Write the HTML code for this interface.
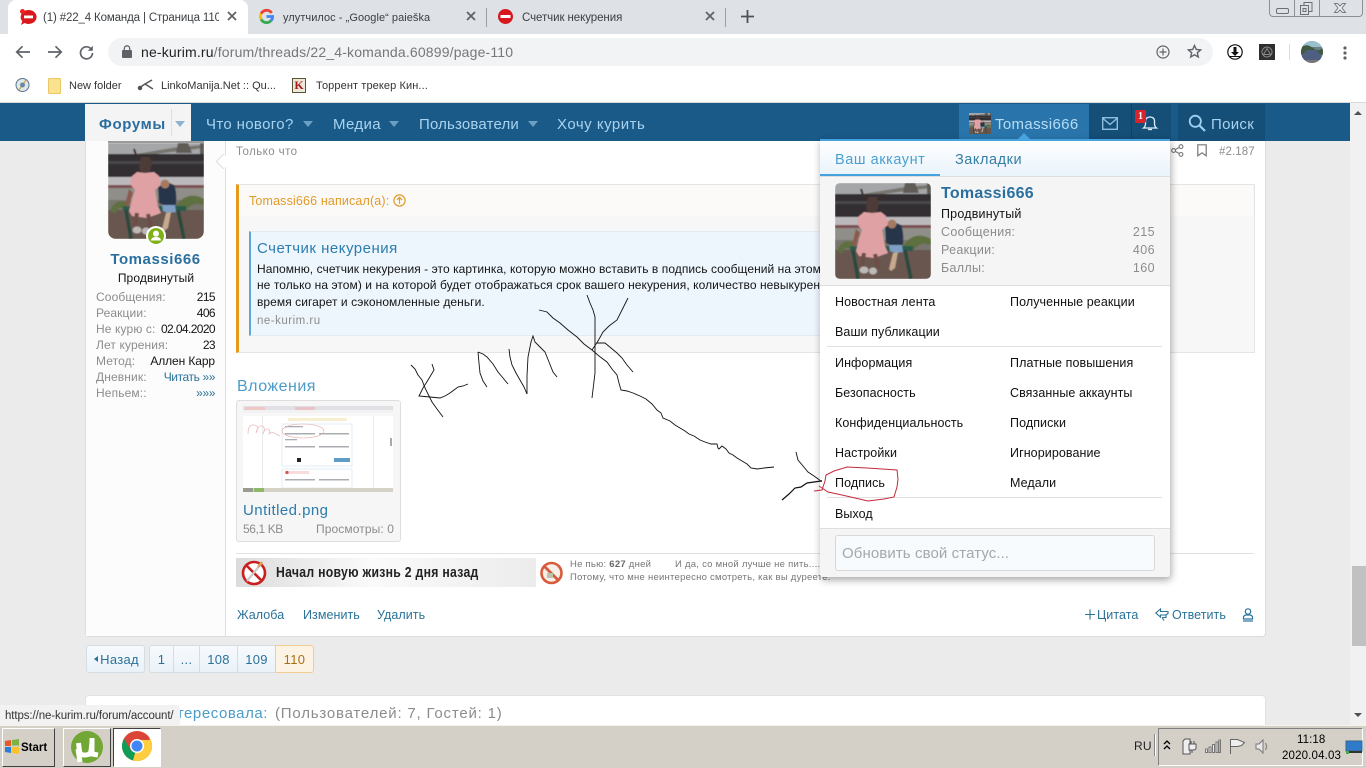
<!DOCTYPE html>
<html lang="ru"><head><meta charset="utf-8"><title>#22_4 Команда</title>
<style>
html,body{margin:0;padding:0;width:1366px;height:768px;overflow:hidden;background:#ebebeb;font-family:"Liberation Sans","Noto Sans CJK SC",sans-serif;font-size:13px;color:#141414}
.a{position:absolute}
.t{position:absolute;white-space:nowrap;line-height:16px;letter-spacing:.42px;margin-top:2px}
.m{font-size:12.5px;letter-spacing:.08px;color:#111}
.s{font-size:12px;letter-spacing:.12px}
.v{font-size:12px;letter-spacing:-.6px}
.b{font-size:12.5px;letter-spacing:.06px}
.r{text-align:right}
.g{color:#8c8c8c}
.l{color:#2a7299}
.n{color:#a9d3ef;font-size:15px;letter-spacing:.25px}
.tri{position:absolute;width:0;height:0;border-left:5.5px solid transparent;border-right:5.5px solid transparent;border-top:6px solid #6c9fc4}
.pg{position:absolute;top:645px;height:26px;line-height:28px;text-align:center;background:linear-gradient(#f7fafd,#eaf2f8);border:1px solid #d4dde3;color:#2a7299;letter-spacing:.3px}
svg{position:absolute;overflow:visible}
</style></head><body>
<svg width="0" height="0" style="position:absolute"><defs>
<filter id="soft"><feGaussianBlur stdDeviation=".55"/></filter>
<symbol id="av" viewBox="0 0 96 96" preserveAspectRatio="none">
<g filter="url(#soft)">
<rect width="96" height="96" fill="#7d7a74"/>
<rect width="96" height="12" fill="#a5a6a8"/>
<path d="M28 11L70 4l26-2v3L40 12z" fill="#77746e"/>
<path d="M70 0h10l4 10H68zM92 0h4v12h-4z" fill="#5f5c57"/>
<rect y="11" width="96" height="23" fill="#302e31"/>
<rect y="18" width="96" height="3" fill="#4a4748"/>
<rect y="34" width="96" height="9" fill="#bcb9bd"/>
<rect y="42" width="96" height="3" fill="#7c5052"/>
<rect y="45" width="96" height="12" fill="#8f8e88"/>
<rect y="57" width="96" height="10" fill="#77756d"/>
<rect y="67" width="96" height="29" fill="#675750"/>
<path d="M2 68q6-14 18-8l-1 6-9-1-3 6zM66 66q12-20 30-10v6q-12-4-18 6z" fill="#5f6f3f"/>
<path d="M15 63h63v5H15z" fill="#2c5b4d"/>
<path d="M18 67l5 29M70 67l6 29" stroke="#2c4a3c" stroke-width="3.500"/>
<path d="M50 44q3-5 9-5l7 3q3 6 2 20l-8 2-9-4z" fill="#26344a"/>
<circle cx="57" cy="41" r="4.500" fill="#a67a60"/>
<path d="M54 62h13l1 7-8 1-5-2z" fill="#7d9fc4"/>
<path d="M58 70l5-1-3 16-4 3-2-2z" fill="#c6a98e"/>
<path d="M33 14h9l2 7-2 7-3 3h-5l-3-6z" fill="#4d3b38"/>
<path d="M26 6l2 6 5 3M48 11l-2 4-4 1" stroke="#3a2e2c" stroke-width="2" fill="none"/>
<path d="M29 29l8 1 9-1 5 4 2 9-6 5 3 16 3 7-14 5-15-2-3-5 3-12 3-9-5-6 1-7z" fill="#dfa1a4"/>
<path d="M21 46l-4 16 3 2 5-14z" fill="#8c5a4e"/>
<path d="M29 70l-2 14M40 71l3 14" stroke="#6e4e46" stroke-width="4"/>
<ellipse cx="29" cy="87" rx="4.500" ry="3.500" fill="#bdb9b6"/><ellipse cx="38" cy="88" rx="4" ry="3.500" fill="#bdb9b6"/>
</g>
</symbol>
</defs></svg>

<!-- page area -->
<div class="a" style="left:0;top:103px;width:1350px;height:622px;background:#ebebeb"></div>
<div class="a" style="left:1350px;top:103px;width:16px;height:622px;background:#f1f1f1"></div>
<div class="a" style="left:1352px;top:566px;width:14px;height:80px;background:#c1c1c1"></div>
<div class="a" style="left:1354px;top:111px;width:0;height:0;border-left:4px solid transparent;border-right:4px solid transparent;border-bottom:4px solid #505050"></div>
<div class="a" style="left:1354px;top:713px;width:0;height:0;border-left:4px solid transparent;border-right:4px solid transparent;border-top:4px solid #505050"></div>

<!-- post card -->
<div class="a" style="left:85px;top:135px;width:1179px;height:501px;background:#fff;border:1px solid #dcdcdc;border-top:0;border-radius:0 0 4px 4px"></div>
<div class="a" style="left:86px;top:141px;width:139px;height:495px;background:#fcfcfc;border-right:1px solid #dedede"></div>
<div class="a" style="left:218px;top:156px;width:10px;height:10px;background:#fff;transform:rotate(45deg);border-left:1px solid #dedede;border-bottom:1px solid #dedede"></div>
<svg style="left:108px;top:143px;border-radius:0 0 8px 8px;overflow:hidden" width="96" height="96"><use href="#av" width="96" height="96"/></svg>
<div class="a" style="left:108px;top:141px;width:96px;height:2px;background:#9a9a9a"></div>
<svg style="left:146px;top:226px" width="20" height="20" viewBox="0 0 20 20"><circle cx="10" cy="10" r="10" fill="#fff"/><circle cx="10" cy="10" r="8" fill="#7fb016"/><circle cx="10" cy="7.6" r="3" fill="#fff"/><path d="M4.800 14.500q1-3.600 5.200-3.600t5.200 3.600z" fill="#fff"/></svg>
<div class="t" style="left:86px;width:139px;text-align:center;top:250px;font-size:15px;font-weight:bold;color:#2a6f9f;letter-spacing:.55px">Tomassi666</div>
<div class="t" style="left:86px;width:140px;text-align:center;top:268px;font-size:12px;letter-spacing:.1px">Продвинутый</div>
<div class="t g s" style="left:96px;top:287px">Сообщения:</div><div class="t r v" style="right:1151px;top:287px">215</div>
<div class="t g s" style="left:96px;top:303px">Реакции:</div><div class="t r v" style="right:1151px;top:303px">406</div>
<div class="t g s" style="left:96px;top:319px">Не курю с:</div><div class="t r v" style="right:1151px;top:319px">02.04.2020</div>
<div class="t g s" style="left:96px;top:335px">Лет курения:</div><div class="t r v" style="right:1151px;top:335px">23</div>
<div class="t g s" style="left:96px;top:351px">Метод:</div><div class="t r" style="right:1151px;top:351px;font-size:12px;letter-spacing:-.1px">Аллен Карр</div>
<div class="t g s" style="left:96px;top:367px">Дневник:</div><div class="t r l" style="right:1151px;top:367px;font-size:12px;letter-spacing:-.4px">Читать »»</div>
<div class="t g s" style="left:96px;top:383px">Непьем::</div><div class="t r l" style="right:1151px;top:383px;font-size:12px;letter-spacing:-.4px">»»»</div>

<div class="t g" style="left:236px;top:142px;font-size:11.5px">Только что</div>
<svg style="left:1171px;top:144px" width="13" height="13" viewBox="0 0 13 13" fill="none" stroke="#777" stroke-width="1.100"><circle cx="2.600" cy="6.500" r="1.900"/><circle cx="10" cy="2.600" r="1.900"/><circle cx="10" cy="10.400" r="1.900"/><path d="M4.300 5.600l4-2.200M4.300 7.400l4 2.200"/></svg>
<svg style="left:1197px;top:144px" width="10" height="13" viewBox="0 0 10 13" fill="none" stroke="#777" stroke-width="1.200"><path d="M.8.800h8.400v11L5 8.800.8 11.800z"/></svg>
<div class="t g" style="left:1219px;top:142px;font-size:11.500px;letter-spacing:.1px">#2.187</div>

<!-- quote -->
<div class="a" style="left:236px;top:184px;width:1015px;height:167px;background:#f7f7f7;border:1px solid #e5e5e5;border-left:3px solid #e59a1e"></div>
<div class="a" style="left:239px;top:185px;width:1014px;height:31px;background:#fbfaf8"></div>
<div class="t" style="left:249px;top:191px;color:#e09b2a;font-size:12.500px;letter-spacing:.15px">Tomassi666 написал(а):</div>
<svg style="left:393px;top:194px" width="13" height="13" viewBox="0 0 13 13" fill="none" stroke="#e09b2a" stroke-width="1.200"><circle cx="6.500" cy="6.500" r="5.600"/><path d="M6.500 9.700V3.600M3.900 6l2.600-2.600L9.100 6"/></svg>
<div class="a" style="left:249px;top:231px;width:600px;height:103px;background:#eef6fd;border:1px solid #e3ebf1;border-left:2px solid #5ea7d3"></div>
<div class="t" style="left:257px;top:239px;font-size:15px;color:#2d7cae;letter-spacing:.5px">Счетчик некурения</div>
<div class="t" style="left:257px;top:259px;font-size:12px;letter-spacing:.06px">Напомню, счетчик некурения - это картинка, которую можно вставить в подпись сообщений на этом</div>
<div class="t" style="left:257px;top:275px;font-size:12px;letter-spacing:.06px">не только на этом) и на которой будет отображаться срок вашего некурения, количество невыкуренн</div>
<div class="t" style="left:257px;top:292px;font-size:12px;letter-spacing:.06px">время сигарет и сэкономленные деньги.</div>
<div class="t g" style="left:257px;top:311px;font-size:11.500px;letter-spacing:.5px">ne-kurim.ru</div>

<!-- attachment -->
<div class="t" style="left:237px;top:377px;font-size:16px;color:#4b9bc9;letter-spacing:.5px">Вложения</div>
<div class="a" style="left:236px;top:400px;width:163px;height:140px;background:#f6f6f6;border:1px solid #dedede;border-radius:3px"></div>
<svg style="left:243px;top:406px" width="150" height="86" viewBox="0 0 150 86">
<rect width="150" height="86" fill="#fff"/><rect width="150" height="4" fill="#dfe1e4"/><rect y="4" width="150" height="3" fill="#f2f2f2"/><rect y="7" width="150" height="3" fill="#f7f7f7"/>
<rect x="2" y="1" width="20" height="3" fill="#f3c6c6"/><rect x="52" y="1" width="20" height="3" fill="#e9c3c8"/>
<rect x="45" y="12" width="59" height="3" fill="#f8efd3"/>
<rect x="19" y="10" width="1" height="72" fill="#ebebeb"/><rect x="130" y="10" width="1" height="72" fill="#ebebeb"/>
<rect x="39" y="18" width="70" height="42" fill="#fff" stroke="#d5e4f0" stroke-width=".7"/>
<rect x="39" y="63" width="70" height="19" fill="#fff" stroke="#d5e4f0" stroke-width=".7"/>
<g fill="#a9adb2"><rect x="42" y="20" width="18" height="1.300"/><rect x="42" y="33" width="12" height="1.300"/><rect x="42" y="27" width="30" height="1.500"/><rect x="76" y="27" width="30" height="1.500"/><rect x="42" y="40" width="30" height="1.500"/><rect x="76" y="40" width="30" height="1.500"/><rect x="42" y="73" width="30" height="1.500"/><rect x="76" y="73" width="30" height="1.500"/></g>
<rect x="54" y="52" width="4" height="4" fill="#222"/><rect x="91" y="52" width="16" height="4" fill="#5e9dc4"/><rect x="42" y="65" width="24" height="3" fill="#f6dcdc"/><circle cx="44" cy="66.500" r="1.600" fill="#d9534f"/>
<path d="M5 28q0-10 6-9t2 8q2-8 6-7t1 8q2-6 5-5t1 5l3-2 8 4" fill="none" stroke="#edbcbc" stroke-width=".8"/>
<ellipse cx="60" cy="25" rx="21" ry="7" fill="none" stroke="#e8a7a7" stroke-width=".6"/>
<rect x="147" y="32" width="2" height="8" fill="#aaa"/><rect y="82" width="150" height="4" fill="#d5d2c8"/><rect x="0" y="82" width="10" height="4" fill="#9a9a90"/><rect x="11" y="82" width="10" height="4" fill="#8fb868"/>
</svg>
<div class="t l" style="left:243px;top:501px;font-size:15px;color:#2b7cab;letter-spacing:.45px">Untitled.png</div>
<div class="t g" style="left:243px;top:519px;font-size:12px;letter-spacing:-.4px">56,1 KB</div>
<div class="t g r" style="right:972px;top:519px;font-size:12px;letter-spacing:.1px">Просмотры: 0</div>

<!-- signature -->
<div class="a" style="left:236px;top:553px;width:1018px;height:1px;background:#e2e2e2"></div>
<div class="a" style="left:236px;top:558px;width:300px;height:29px;background:linear-gradient(90deg,#dcdcdc,#fafafa 45%,#ececec)"></div>
<svg style="left:241px;top:559px" width="26" height="27" viewBox="0 0 26 27"><circle cx="13" cy="14" r="11" fill="#fff" stroke="#c8201f" stroke-width="2.600"/><path d="M5 6l16 16" stroke="#c8201f" stroke-width="2.600"/><path d="M6 22L20 5" stroke="#c9c9c9" stroke-width="2.200"/><path d="M17 8l4-5" stroke="#d9a15a" stroke-width="2.400"/></svg>
<div class="t" style="left:276px;top:563px;font-size:15px;font-weight:bold;letter-spacing:.35px;transform:scaleX(.815);transform-origin:0 50%;color:#222">Начал новую жизнь 2 дня назад</div>
<svg style="left:539px;top:560px" width="25" height="26" viewBox="0 0 25 26"><circle cx="12.500" cy="13" r="10" fill="#f7efe8" stroke="#d85b3c" stroke-width="2.600"/><path d="M5 6l15 15" stroke="#d85b3c" stroke-width="2.800"/><rect x="8" y="13" width="6" height="5" fill="#b9c4a8"/></svg>
<div class="t" style="left:570px;top:555px;font-size:9.500px;color:#777;letter-spacing:.25px">Не пью: <b style="color:#666">627</b> дней</div>
<div class="t" style="left:675px;top:555px;font-size:9.500px;color:#777;letter-spacing:.25px">И да, со мной лучше не пить....</div>
<div class="t" style="left:570px;top:568px;font-size:9.500px;color:#777;letter-spacing:.25px">Потому, что мне неинтересно смотреть, как вы дуреете.</div>

<!-- actions -->
<div class="t l b" style="left:237px;top:605px">Жалоба</div>
<div class="t l b" style="left:303px;top:605px">Изменить</div>
<div class="t l b" style="left:377px;top:605px">Удалить</div>
<svg style="left:1085px;top:609px" width="10" height="11" viewBox="0 0 10 11" stroke="#2a7299" stroke-width="1.100"><path d="M5 .5v10M0 5.500h10"/></svg>
<div class="t l b" style="left:1097px;top:605px">Цитата</div>
<svg style="left:1155px;top:608px" width="14" height="13" viewBox="0 0 14 13" fill="none" stroke="#2a7299" stroke-width="1.100"><path d="M5.500 1L.8 5l4.700 4V7h5.500l2-1.500V3.500H5.500z"/><path d="M11 7v2.500H7.500M9 12.500l-2-3"/></svg>
<div class="t l b" style="left:1172px;top:605px">Ответить</div>
<svg style="left:1242px;top:608px" width="12" height="14" viewBox="0 0 12 14" fill="none" stroke="#2a7299" stroke-width="1.200"><circle cx="6" cy="3.500" r="2.700"/><path d="M1.500 9.500q0-2 2.500-2.500h4q2.500.5 2.500 2.500v1.500h-9z"/><path d="M1 13h10"/></svg>

<!-- pagination -->
<div class="pg" style="left:86px;width:57px;border-radius:3px;text-indent:8px">Назад</div>
<div class="a" style="left:94px;top:656px;width:0;height:0;border-top:3.500px solid transparent;border-bottom:3.500px solid transparent;border-right:4px solid #2a7299"></div>
<div class="pg" style="left:149px;width:23px;border-radius:3px 0 0 3px">1</div>
<div class="pg" style="left:173px;width:25px">...</div>
<div class="pg" style="left:199px;width:37px">108</div>
<div class="pg" style="left:237px;width:37px">109</div>
<div class="pg" style="left:275px;width:37px;background:#fdf3e5;border-color:#f1cd92;color:#a96f12;border-radius:0 3px 3px 0">110</div>

<!-- bottom card -->
<div class="a" style="left:85px;top:695px;width:1179px;height:40px;background:#fff;border:1px solid #e2e2e2;border-radius:4px 4px 0 0"></div>
<div class="t r" style="right:1098px;top:704px;font-size:15px;color:#4b9bc9;letter-spacing:.55px">Тему интересовала:</div>
<div class="t g" style="left:275px;top:704px;font-size:15px;letter-spacing:.8px;color:#8c8c8c">(Пользователей: 7, Гостей: 1)</div>
<div class="a" style="left:0;top:705px;width:180px;height:20px;background:#f2f2f2;border-radius:0 3px 0 0"></div>
<div class="t" style="left:5px;top:706px;font-size:11.500px;color:#333;letter-spacing:-.1px">https://ne-kurim.ru/forum/account/</div>

<!-- nav -->
<div class="a" style="left:0;top:103px;width:1350px;height:38px;background:#1a5a88"></div>
<div class="a" style="left:0;top:102px;width:1366px;height:1px;background:#dadada"></div>
<div class="a" style="left:85px;top:104px;width:106px;height:37px;background:#f4f4f4"></div>
<div class="t" style="left:99px;top:115px;font-size:15px;font-weight:bold;color:#2b6d9f;letter-spacing:.65px">Форумы</div>
<div class="a" style="left:171px;top:109px;width:1px;height:27px;background:#dedede"></div>
<div class="tri" style="left:175px;top:121px;border-top-color:#8fb3cf"></div>
<div class="t n" style="left:206px;top:115px;letter-spacing:.35px">Что нового?</div><div class="tri" style="left:303px;top:121px"></div>
<div class="t n" style="left:333px;top:115px;letter-spacing:.35px">Медиа</div><div class="tri" style="left:389px;top:121px"></div>
<div class="t n" style="left:419px;top:115px;letter-spacing:.17px">Пользователи</div><div class="tri" style="left:528px;top:121px"></div>
<div class="t n" style="left:557px;top:115px;letter-spacing:.5px">Хочу курить</div>
<div class="a" style="left:959px;top:104px;width:130px;height:37px;background:#2975ab"></div>
<svg style="left:969px;top:113px" width="22" height="21"><use href="#av" width="22" height="21"/></svg>
<div class="t n" style="left:995px;top:115px;color:#b7ddf6;letter-spacing:.35px">Tomassi666</div>
<div class="a" style="left:1089px;top:104px;width:42px;height:37px;background:#154e77"></div>
<div class="a" style="left:1131px;top:104px;width:39px;height:37px;background:#154e77;border-left:1px solid #0f4268"></div>
<svg style="left:1102px;top:117px" width="16" height="13" viewBox="0 0 16 13" fill="none" stroke="#8ebfe0" stroke-width="1.400"><rect x=".7" y=".7" width="14.600" height="11.600"/><path d="M1 1.500l7 6 7-6"/></svg>
<svg style="left:1142px;top:115px" width="16" height="16" viewBox="0 0 16 16" fill="none" stroke="#dcf0ff" stroke-width="1.300"><path d="M1.500 13h13q-2-1.500-2-4V6.500q0-4.500-4.500-4.500T3.500 6.500V9q0 2.500-2 4z"/><path d="M6 14.500h4"/></svg>
<div class="a" style="left:1135px;top:110px;width:11px;height:13px;background:#d9232d;border-radius:2px;color:#fff;font:bold 10px/13px 'Liberation Serif',serif;text-align:center">1</div>
<div class="a" style="left:1178px;top:104px;width:87px;height:37px;background:#154e77"></div>
<svg style="left:1188px;top:114px" width="18" height="18" viewBox="0 0 18 18" fill="none" stroke="#9bd0f2" stroke-width="1.800"><circle cx="7.300" cy="7.300" r="5.600"/><path d="M11.500 11.500l5.500 5.500" stroke-width="2.200"/></svg>
<div class="t n" style="left:1211px;top:115px;letter-spacing:.3px">Поиск</div>

<!-- drawings under dropdown -->
<svg style="left:0;top:0" width="1366" height="768" fill="none" stroke="#111" stroke-width=".9">
<path d="M411 365l4 4 3 6 4 5 3 8 4 8 3 6 5 7 6 8"/>
<path d="M432 364l2 6-3 5-3 5-5 8-4 8 11 1 10 1 5-2 5-3 4-3 4-3 5-1 5-2"/>
<path d="M478 352l1 11 1 10 3 8 4 6M478 352l5 2 4 3 6 7 5 8 5 6 5 6"/>
<path d="M509 349l1 8 2 8 4 8 4 7 4 7 3 7 0-18 1-19 3-15 2-6 2 6 4 4 6 6 4 10 4 10 4 5"/>
<path d="M539 310l8 2 6 6 7 5 8 7 9 7 7 7 8 6 7 6 8 6 5 7 5 6 2 8 2 7 6 1 6 2 7 3 6 3 6 5 5 6 4 3 2 5 7 3 5 4 5 3 5 3 4 3 5 2 6 4 5 2 6 2 6 0 1 4 1 1 3-3 4 3 3 4 4 2 4 3 5 3 5 3 4 4 6 1 7-1 10-1"/>
<path d="M587 295l3 8 3 7 2 7v56l-3 25"/>
<path d="M628 298l-5 10-6 12-8 6-6 6-5 9-6 9"/>
<path d="M597 343h8l6 5 6 5 5 5 5 7 6 7"/>
<path d="M796 452l1 4 1 4 5 6 5 6 6 4 7 5"/>
<path d="M782 500l7-6 6-6 6-1 6-4 7-1 7-1" stroke-width="1.200"/>
</svg>

<!-- dropdown -->
<div class="a" style="left:820px;top:139px;width:350px;height:438px;background:#fff;box-shadow:1px 3px 8px rgba(0,0,0,.35);border-radius:0 0 3px 3px"></div>
<div class="a" style="left:820px;top:139px;width:350px;height:2px;background:#47a2e0"></div>
<div class="a" style="left:1018px;top:133px;width:0;height:0;border-left:6px solid transparent;border-right:6px solid transparent;border-bottom:6px solid #47a2e0"></div>
<div class="a" style="left:820px;top:141px;width:350px;height:35px;background:linear-gradient(#fff,#e9f3fb)"></div>
<div class="t" style="left:835px;top:150px;font-size:14.500px;color:#4a9fd1;letter-spacing:.55px">Ваш аккаунт</div>
<div class="t" style="left:955px;top:150px;font-size:14.500px;color:#357ea6;letter-spacing:.55px">Закладки</div>
<div class="a" style="left:820px;top:174px;width:120px;height:2px;background:#47a2e0"></div>
<div class="a" style="left:820px;top:176px;width:350px;height:110px;background:#f5f5f5;border-top:1px solid #dedede;box-sizing:border-box;border-bottom:1px solid #dedede"></div>
<svg style="left:835px;top:183px;border-radius:5px;overflow:hidden" width="96" height="96"><use href="#av" width="96" height="96"/></svg>
<div class="t" style="left:941px;top:184px;font-size:16px;font-weight:bold;color:#2a6f9f;letter-spacing:.25px">Tomassi666</div>
<div class="t" style="left:941px;top:204px;font-size:12.500px;letter-spacing:.2px">Продвинутый</div>
<div class="t g" style="left:941px;top:222px;font-size:12.500px;letter-spacing:.3px">Сообщения:</div><div class="t g r" style="right:211px;top:222px;font-size:12.500px">215</div>
<div class="t g" style="left:941px;top:240px;font-size:12.500px;letter-spacing:.3px">Реакции:</div><div class="t g r" style="right:211px;top:240px;font-size:12.500px">406</div>
<div class="t g" style="left:941px;top:258px;font-size:12.500px;letter-spacing:.3px">Баллы:</div><div class="t g r" style="right:211px;top:258px;font-size:12.500px">160</div>
<div class="t m" style="left:835px;top:292px">Новостная лента</div><div class="t m" style="left:1010px;top:292px">Полученные реакции</div>
<div class="t m" style="left:835px;top:322px">Ваши публикации</div>
<div class="a" style="left:827px;top:346px;width:335px;height:1px;background:#e0e0e0"></div>
<div class="t m" style="left:835px;top:353px">Информация</div><div class="t m" style="left:1010px;top:353px">Платные повышения</div>
<div class="t m" style="left:835px;top:383px">Безопасность</div><div class="t m" style="left:1010px;top:383px">Связанные аккаунты</div>
<div class="t m" style="left:835px;top:413px">Конфиденциальность</div><div class="t m" style="left:1010px;top:413px">Подписки</div>
<div class="t m" style="left:835px;top:443px">Настройки</div><div class="t m" style="left:1010px;top:443px">Игнорирование</div>
<div class="t m" style="left:835px;top:473px">Подпись</div><div class="t m" style="left:1010px;top:473px">Медали</div>
<div class="a" style="left:827px;top:497px;width:335px;height:1px;background:#e0e0e0"></div>
<div class="t m" style="left:835px;top:504px">Выход</div>
<div class="a" style="left:820px;top:528px;width:350px;height:49px;background:#f5f5f5;border-top:1px solid #dedede;box-sizing:border-box;border-radius:0 0 3px 3px"></div>
<div class="a" style="left:835px;top:535px;width:318px;height:34px;background:#f7fbfe;border:1px solid #d8d8d8;border-radius:3px"></div>
<div class="t" style="left:842px;top:544px;font-size:15px;color:#a3a8ab;letter-spacing:.1px">Обновить свой статус...</div>

<!-- red circle + arrow tip -->
<svg style="left:0;top:0" width="1366" height="768" fill="none">
<path d="M814 491l8-1 3-9 1-6 8-4 13-4 20 1 15 1 15 1 1 9-1 8-3 10-10 2-16 2-13-3-13-3-14-3-9-6" stroke="#c32a3a" stroke-width="1"/>
<circle cx="821" cy="481" r="1" fill="#111"/>
</svg>

<!-- chrome -->
<div class="a" style="left:0;top:0;width:1366px;height:34px;background:#dee1e6"></div>
<div class="a" style="left:8px;top:0;width:240px;height:34px;background:#fff;border-radius:8px 8px 0 0"></div>
<svg style="left:19px;top:8px" width="18" height="18" viewBox="0 0 18 18"><path d="M9 2a8 7 0 1 1-3.500 13L2 17l1.300-3.800A8 7 0 0 1 9 2z" fill="#d8171e"/><rect x="5" y="7.500" width="9" height="2.800" fill="#fff"/><circle cx="3.500" cy="3.500" r="2.500" fill="#e22"/></svg>
<div class="t" style="left:43px;top:8px;width:176px;overflow:hidden;font-size:11.500px;letter-spacing:-.14px;color:#3c4043">(1) #22_4 Команда | Страница 110</div>
<svg style="left:227px;top:11px" width="10" height="10" viewBox="0 0 10 10" stroke="#5f6368" stroke-width="1.800"><path d="M1 1l8 8M9 1l-8 8"/></svg>
<svg style="left:259px;top:9px" width="15" height="15" viewBox="0 0 16 16" fill="none" stroke-width="3"><path d="M13.500 4.200A6.500 6.500 0 0 0 2.300 5" stroke="#ea4335"/><path d="M2.300 5a6.500 6.500 0 0 0 0 6" stroke="#fbbc05"/><path d="M2.300 11a6.500 6.500 0 0 0 10.500 1.500" stroke="#34a853"/><path d="M12.800 12.500A6.500 6.500 0 0 0 14.500 8H8" stroke="#4285f4"/></svg>
<div class="t" style="left:283px;top:8px;font-size:11px;letter-spacing:.05px;color:#3c4043">улутчилос - „Google“ paieška</div>
<svg style="left:466px;top:11px" width="10" height="10" viewBox="0 0 10 10" stroke="#5f6368" stroke-width="1.800"><path d="M1 1l8 8M9 1l-8 8"/></svg>
<div class="a" style="left:486px;top:8px;width:1px;height:19px;background:#9aa0a6"></div>
<svg style="left:498px;top:9px" width="15" height="15" viewBox="0 0 15 15"><circle cx="7.500" cy="7.500" r="7.500" fill="#d8171e"/><rect x="2.500" y="6" width="10" height="3" fill="#fff"/></svg>
<div class="t" style="left:522px;top:8px;font-size:11.500px;letter-spacing:-.07px;color:#3c4043">Счетчик некурения</div>
<svg style="left:705px;top:11px" width="10" height="10" viewBox="0 0 10 10" stroke="#5f6368" stroke-width="1.800"><path d="M1 1l8 8M9 1l-8 8"/></svg>
<div class="a" style="left:725px;top:8px;width:1px;height:19px;background:#9aa0a6"></div>
<svg style="left:741px;top:10px" width="13" height="13" viewBox="0 0 13 13" stroke="#4d5156" stroke-width="1.800"><path d="M6.500 0v13M0 6.500h13"/></svg>
<!-- window controls -->
<div class="a" style="left:1269px;top:-2px;width:92px;height:17px;border:1px solid #8d8f94;border-radius:0 0 4px 4px"></div>
<div class="a" style="left:1294px;top:0;width:1px;height:16px;background:#8d8f94"></div>
<div class="a" style="left:1319px;top:0;width:1px;height:16px;background:#8d8f94"></div>
<div class="a" style="left:1276px;top:8px;width:11px;height:4px;border:1px solid #6c6e73;border-radius:2px"></div>
<svg style="left:1300px;top:2px" width="13" height="13" viewBox="0 0 13 13" fill="none" stroke="#6c6e73"><rect x=".5" y="3.500" width="8" height="9"/><path d="M4 3V.5h8v9H9"/><rect x="3" y="6.500" width="3" height="3"/></svg>
<svg style="left:1334px;top:3px" width="12" height="10" viewBox="0 0 12 10" fill="#eceef1" stroke="#7a7c81"><path d="M.5.500h3L6 3 8.500.5h3L8 5l3.500 4.500h-3L6 7 3.500 9.500h-3L4 5z"/></svg>

<div class="a" style="left:0;top:34px;width:1366px;height:68px;background:#fff"></div>
<svg style="left:15px;top:45px" width="16" height="14" viewBox="0 0 16 14" fill="none" stroke="#5f6368" stroke-width="1.700"><path d="M15 7H2M7.500 1.300L1.700 7l5.800 5.700"/></svg>
<svg style="left:47px;top:45px" width="16" height="14" viewBox="0 0 16 14" fill="none" stroke="#5f6368" stroke-width="1.700"><path d="M1 7h13M8.500 1.300L14.300 7l-5.800 5.700"/></svg>
<svg style="left:79px;top:45px" width="15" height="15" viewBox="0 0 15 15" fill="none" stroke="#5f6368" stroke-width="1.700"><path d="M12.500 4.500A6 6 0 1 0 13.500 8"/><path d="M13.800 .8v5h-5z" fill="#5f6368" stroke="none"/></svg>
<div class="a" style="left:108px;top:38px;width:1105px;height:28px;background:#f1f3f4;border-radius:14px"></div>
<svg style="left:122px;top:45px" width="10" height="13" viewBox="0 0 10 13"><rect y="5" width="10" height="8" rx="1" fill="#5f6368"/><path d="M2.300 5.500V3.500a2.700 2.700 0 0 1 5.400 0v2" fill="none" stroke="#5f6368" stroke-width="1.300"/></svg>
<div class="t" style="left:141px;top:42px;font-size:14px;letter-spacing:.17px;color:#777"><span style="color:#222">ne-kurim.ru</span>/forum/threads/22_4-komanda.60899/page-110</div>
<svg style="left:1156px;top:45px" width="14" height="14" viewBox="0 0 14 14" fill="none" stroke="#5f6368" stroke-width="1.200"><circle cx="7" cy="7" r="6"/><path d="M7 3.500v7M3.500 7h7"/></svg>
<svg style="left:1187px;top:44px" width="15" height="15" viewBox="0 0 15 15" fill="none" stroke="#5f6368" stroke-width="1.400"><path d="M7.500 1.500l1.800 4 4.300.4-3.300 2.900 1 4.200-3.800-2.200-3.800 2.200 1-4.200L1.400 5.900l4.300-.4z"/></svg>
<svg style="left:1227px;top:44px" width="16" height="16" viewBox="0 0 16 16"><circle cx="8" cy="8" r="7.200" fill="#fff" stroke="#111" stroke-width="1.200"/><path d="M6.500 3h3v5h2.500L8 12 4 8h2.500z" fill="#111"/><path d="M3 12.500h10" stroke="#111"/></svg>
<div class="a" style="left:1259px;top:44px;width:16px;height:16px;background:#2e2e2e"></div>
<svg style="left:1261px;top:46px" width="12" height="12" viewBox="0 0 12 12" fill="none" stroke="#888"><circle cx="6" cy="6" r="5"/><path d="M6 2.500L9.500 8.500h-7z"/></svg>
<div class="a" style="left:1289px;top:44px;width:1px;height:16px;background:#dadce0"></div>
<svg style="left:1301px;top:41px;" width="22" height="22" viewBox="0 0 22 22"><defs><clipPath id="pc"><circle cx="11" cy="11" r="11"/></clipPath></defs><g clip-path="url(#pc)"><rect width="22" height="22" fill="#6a7f84"/><rect width="22" height="6" fill="#9ac0cf"/><path d="M0 6q6-4 12 1t10-1v8H0z" fill="#3f5a3f"/><path d="M1 14l5-5h9l5 5v5H1z" fill="#4f5f82"/><rect y="19" width="22" height="3" fill="#777"/></g></svg>
<svg style="left:1343px;top:46px" width="4" height="14" viewBox="0 0 4 14" fill="#5f6368"><circle cx="2" cy="2" r="1.600"/><circle cx="2" cy="7" r="1.600"/><circle cx="2" cy="12" r="1.600"/></svg>

<!-- bookmarks -->
<svg style="left:15px;top:77px" width="15" height="16" viewBox="0 0 15 16"><circle cx="7.500" cy="8" r="6.500" fill="#dfe8ee" stroke="#5c7688"/><path d="M4 13l7-10" stroke="#d4a84a" stroke-width="1.300"/><circle cx="7.500" cy="8" r="2.500" fill="#6b8aa0"/></svg>
<div class="a" style="left:48px;top:78px;width:11px;height:14px;background:#fbe28f;border:1px solid #e8c867;border-radius:1px"></div>
<div class="t" style="left:69px;top:76px;font-size:11px;letter-spacing:0;color:#333">New folder</div>
<svg style="left:138px;top:78px" width="16" height="13" viewBox="0 0 16 13" stroke="#555" stroke-width="1.500" fill="none"><path d="M1 10l6-4 8 5M7 6l7-4"/><circle cx="2" cy="10" r="1.500" fill="#555"/></svg>
<div class="t" style="left:161px;top:76px;font-size:11px;letter-spacing:0;color:#333">LinkoManija.Net :: Qu...</div>
<div class="a" style="left:292px;top:78px;width:14px;height:15px;background:#efe7d8;border:1px solid #553;box-sizing:border-box;color:#a11c1c;font:bold 12px/13px 'Liberation Serif',serif;text-align:center">K</div>
<div class="t" style="left:316px;top:76px;font-size:11px;letter-spacing:.1px;color:#333">Торрент трекер Кин...</div>

<!-- taskbar -->
<div class="a" style="left:0;top:725px;width:1366px;height:43px;background:#d4d0c8;border-top:1px solid #f3f2ee;box-sizing:border-box"></div>
<div class="a" style="left:2px;top:728px;width:51px;height:37px;background:#d4d0c8;border:1px solid;border-color:#fff #404040 #404040 #fff"></div>
<svg style="left:4px;top:739px" width="16" height="15" viewBox="0 0 16 15"><path d="M1 2l6-1v6H1z" fill="#e55a2b"/><path d="M8 1l7-1v6.500H8z" fill="#7cb342"/><path d="M1 8h6v6l-6-1z" fill="#2b7fd4"/><path d="M8 8h7v7l-7-1z" fill="#f7c22b"/></svg>
<div class="t" style="left:21px;top:738px;font-size:11.500px;font-weight:bold;color:#000;letter-spacing:0">Start</div>
<div class="a" style="left:63px;top:728px;width:46px;height:37px;background:#d4d0c8;border:1px solid;border-color:#fff #404040 #404040 #fff"></div>
<svg style="left:71px;top:731px" width="32" height="32" viewBox="0 0 32 32"><circle cx="16" cy="16" r="16" fill="#72a735"/><path d="M7.500 12l1 8q.5 4 5 4 6 0 6.500-4l1-9" fill="none" stroke="#fff" stroke-width="5"/><path d="M7 18l2 13" stroke="#fff" stroke-width="5"/><path d="M21 7v16l6 1" fill="none" stroke="#fff" stroke-width="5"/></svg>
<div class="a" style="left:113px;top:728px;width:46px;height:37px;background:#fff;border:1px solid;border-color:#404040 #fff #fff #404040"></div>
<svg style="left:122px;top:731px" width="30" height="30" viewBox="0 0 30 30"><circle cx="15" cy="15" r="15" fill="#db4437"/><path d="M15 15L2 7.500A15 15 0 0 0 11 29.500z" fill="#0f9d58"/><path d="M15 15l-4 14.500A15 15 0 0 0 28 7.500H15z" fill="#ffcd40"/><path d="M2 7.500L9 19.500 15 9h13A15 15 0 0 0 2 7.500z" fill="#db4437"/><circle cx="15" cy="15" r="7" fill="#fff"/><circle cx="15" cy="15" r="5.500" fill="#4285f4"/></svg>
<div class="t" style="left:1134px;top:736px;font-size:12px;color:#222;letter-spacing:.2px">RU</div>
<div class="a" style="left:1154px;top:734px;width:1px;height:22px;background:#888;border-right:1px solid #fff"></div>
<div class="a" style="left:1158px;top:728px;width:203px;height:36px;border:1px solid;border-color:#808080 #fff #fff #808080"></div>
<svg style="left:1163px;top:740px" width="8" height="10" viewBox="0 0 8 10" fill="none" stroke="#000" stroke-width="1.300"><path d="M1 4l3-3 3 3M1 9l3-3 3 3"/></svg>
<svg style="left:1181px;top:738px" width="16" height="17" viewBox="0 0 16 17" fill="#eee" stroke="#555"><path d="M2 3l2-2h5v15H2z"/><path d="M8 6h7v4q0 2-3 2H8zM10 3v3M13 3v3"/><path d="M11 12v3"/></svg>
<svg style="left:1205px;top:739px" width="16" height="14" viewBox="0 0 16 14" fill="#e8e8e8" stroke="#777"><rect x=".5" y="10" width="2" height="3.500"/><rect x="4" y="8" width="2" height="5.500"/><rect x="7.500" y="5.500" width="2" height="8"/><rect x="11" y="3" width="2" height="10.500"/><rect x="14" y="1" width="1.500" height="12.500"/></svg>
<svg style="left:1229px;top:738px" width="17" height="17" viewBox="0 0 17 17" fill="#eee" stroke="#666"><path d="M1.500 1v15"/><path d="M1.500 1.500h7l7 3-3 3-4 1h-7z"/></svg>
<svg style="left:1255px;top:739px" width="14" height="15" viewBox="0 0 14 15" fill="#e8e8e8" stroke="#777"><path d="M1 5h3l4-4v13l-4-4H1z"/><path d="M10.500 4q2 3.500 0 7" fill="none"/></svg>
<div class="t" style="left:1297px;top:730px;font-size:11.500px;color:#000;letter-spacing:.1px">11:18</div>
<div class="t" style="left:1282px;top:746px;font-size:11.500px;color:#000;letter-spacing:.15px">2020.04.03</div>
<svg style="left:1346px;top:741px" width="16" height="13" viewBox="0 0 16 13"><rect width="16" height="10" fill="#2e7cc9" stroke="#38638a"/><rect x="3" y="10" width="13" height="2" fill="#333"/><rect y="10" width="3" height="3" fill="#4aa84a"/></svg>
</body></html>
